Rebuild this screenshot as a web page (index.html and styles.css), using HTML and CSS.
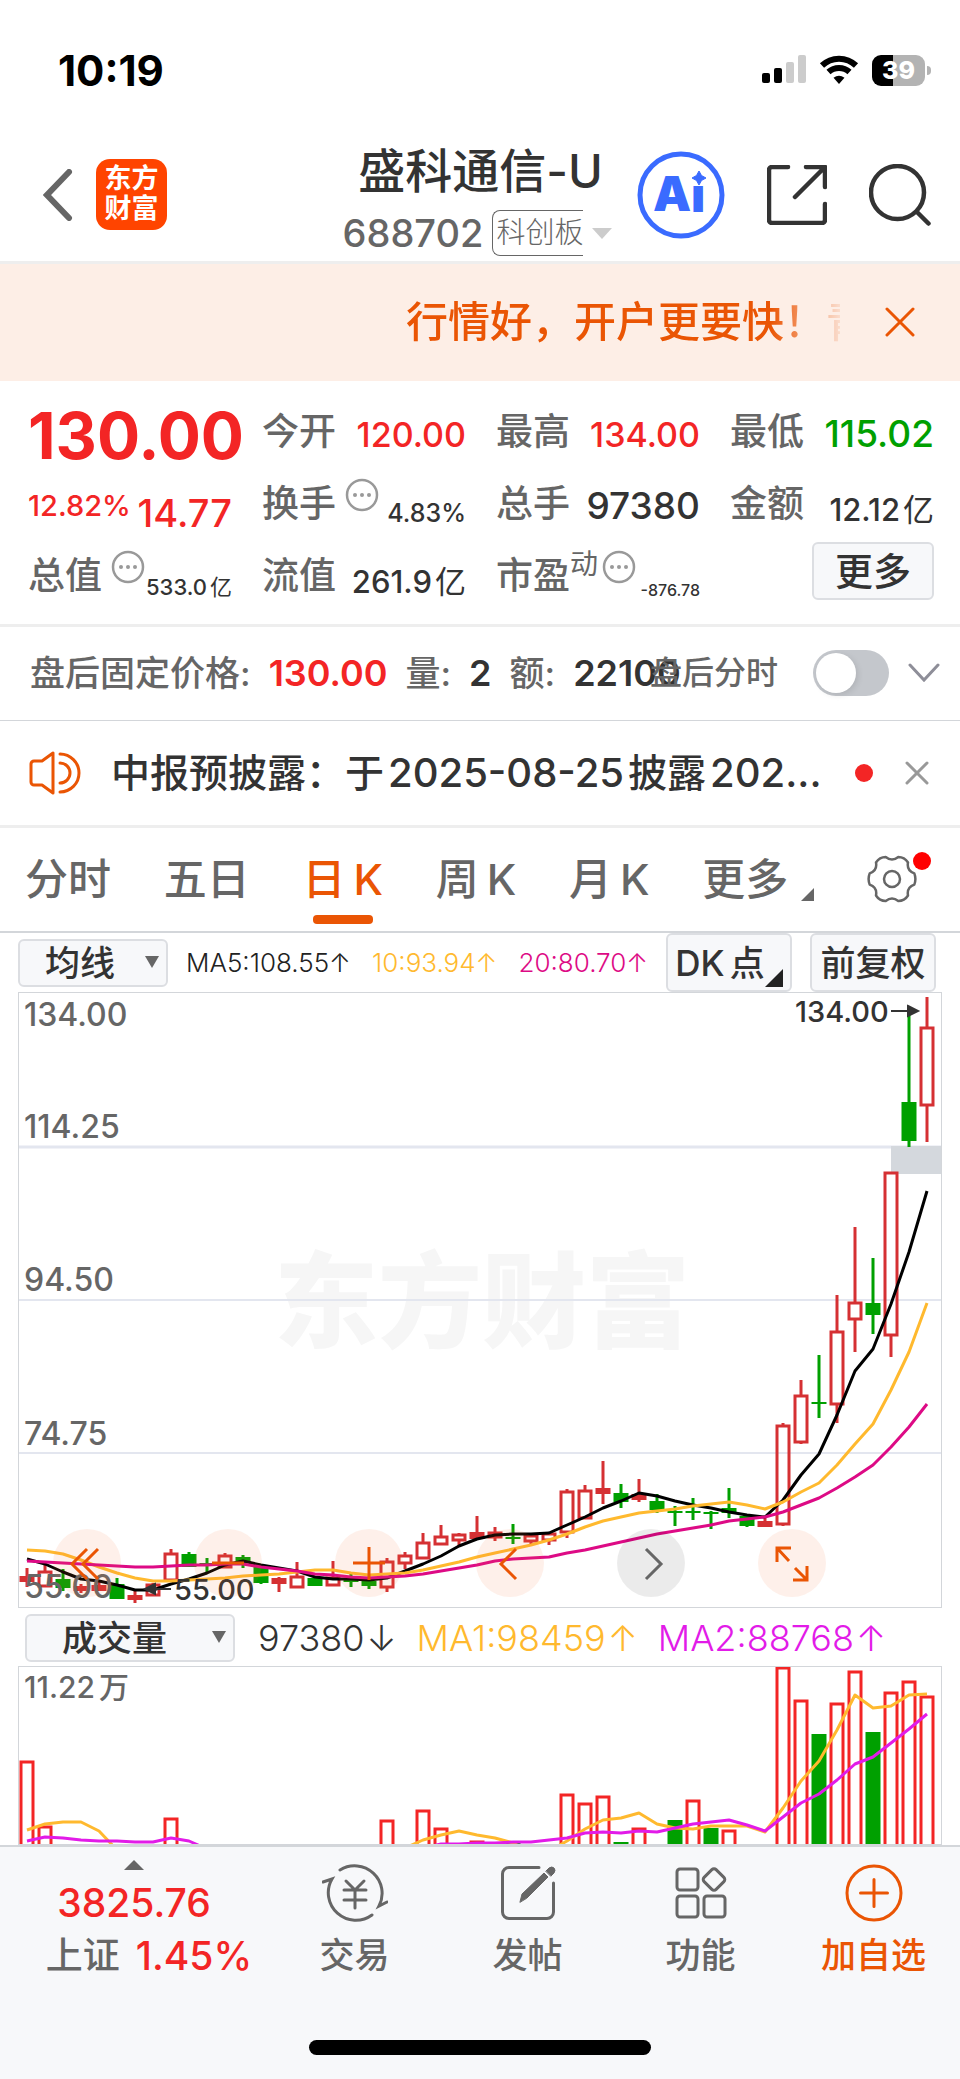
FILE: index.html
```html
<!DOCTYPE html>
<html lang="zh-CN">
<head>
    <meta charset="UTF-8">
    <meta name="viewport" content="width=device-width, initial-scale=1.0">
    <title>盛科通信-U 688702</title>
    <link rel="stylesheet" href="styles.css">
</head>
<body>
    <div class="status-bar">
        <span class="clock">10:19</span>
        <div class="status-icons">
            <svg width="44" height="30" viewBox="0 0 44 30">
                <rect x="0" y="18" width="8" height="10" rx="2"/>
                <rect x="12" y="13" width="8" height="15" rx="2"/>
                <rect x="24" y="7" width="8" height="21" rx="2" fill="#ccc"/>
                <rect x="36" y="0" width="8" height="28" rx="2" fill="#ccc"/>
            </svg>
            <svg width="40" height="30" viewBox="0 0 40 30" fill="none" stroke="#000" stroke-width="6">
                <path d="M3 10.500a24.500 24.500 0 0 1 34 0"/>
                <path d="M9.500 17a15.500 15.500 0 0 1 21 0"/>
                <path d="M20 29l-5.500-6.200a9 9 0 0 1 11 0z" fill="#000" stroke="none"/>
            </svg>
            <div class="battery">39</div>
        </div>
    </div>

    <header class="header">
        <div class="header-left">
            <button class="icon-btn" aria-label="返回">
                <svg width="30" height="52" viewBox="0 0 30 52" fill="none" stroke="#666" stroke-width="6" stroke-linecap="round"><path d="M26 3L4 26l22 23"/></svg>
            </button>
            <div class="logo">东方<br>财富</div>
        </div>
        <div class="header-title">
            <h1>盛科通信-U</h1>
            <div class="header-sub">
                <span class="code">688702</span>
                <span class="board">科创板</span>
                <svg width="20" height="11" viewBox="0 0 20 11"><path d="M0 0h20L10 11z" fill="#ccc"/></svg>
            </div>
        </div>
        <div class="header-right">
            <button class="icon-btn" aria-label="AI">
                <svg width="88" height="88" viewBox="0 0 88 88">
                    <circle cx="44" cy="44" r="41" fill="none" stroke="#3a6bff" stroke-width="5"/>
                    <text class="ai" x="16" y="60">A</text>
                    <text class="ai" x="54" y="61">ı</text>
                    <path d="M62 20l2.500 4.500L69 27l-4.500 2.500L62 34l-2.500-4.500L55 27l4.500-2.500z" fill="#3a6bff" stroke="#3a6bff"/>
                </svg>
            </button>
            <button class="icon-btn" aria-label="分享">
                <svg width="60" height="60" viewBox="0 0 60 60" fill="none" stroke="#333" stroke-width="4.500" stroke-linecap="round" stroke-linejoin="round"><path d="M21 2H5a3 3 0 0 0-3 3v50a3 3 0 0 0 3 3h50a3 3 0 0 0 3-3V39M39 2h19v20M58 2L28 32"/></svg>
            </button>
            <button class="icon-btn" aria-label="搜索">
                <svg width="62" height="62" viewBox="0 0 62 62" fill="none" stroke="#333" stroke-width="4.500" stroke-linecap="round"><circle cx="28.500" cy="28.500" r="26.500"/><path d="M48 48l11.500 11.500"/></svg>
            </button>
        </div>
    </header>

    <div class="banner">
        <a class="banner-text" href="#">行情好，开户更要快！青</a>
        <button class="icon-btn" aria-label="关闭">
            <svg width="30" height="30" viewBox="0 0 30 30" stroke="#ea5504" stroke-width="3" stroke-linecap="round"><path d="M2 2l26 26M28 2L2 28"/></svg>
        </button>
    </div>

    <section class="quote">
        <div class="cell"><span class="price">130.00</span></div>
        <div class="cell"><span class="label">今开</span><span class="value s34 up">120.00</span></div>
        <div class="cell"><span class="label">最高</span><span class="value s34 up">134.00</span></div>
        <div class="cell"><span class="label">最低</span><span class="value s37 down">115.02</span></div>

        <div class="cell"><span class="pct">12.82%</span><span class="change">14.77</span></div>
        <div class="cell"><span class="label">换手</span><svg class="more-dot" viewBox="0 0 34 34"><use href="#dots"/></svg><span class="value s25">4.83%</span></div>
        <div class="cell"><span class="label">总手</span><span class="value s37">97380</span></div>
        <div class="cell"><span class="label">金额</span><span class="value s31">12.12<i>亿</i></span></div>

        <div class="cell"><span class="label">总值</span><svg class="more-dot" viewBox="0 0 34 34"><use href="#dots"/></svg><span class="value s22">533.0<i>亿</i></span></div>
        <div class="cell"><span class="label">流值</span><span class="value s31">261.9<i>亿</i></span></div>
        <div class="cell"><span class="label">市盈</span><sup class="dyn">动</sup><svg class="more-dot" viewBox="0 0 34 34"><use href="#dots"/></svg><span class="value s16">-876.78</span></div>
        <div class="cell"><button class="more-btn">更多</button></div>
    </section>

    <svg class="defs" width="0" height="0">
        <defs>
            <g id="dots">
                <circle cx="17" cy="17" r="15" fill="none" stroke="#999" stroke-width="2.500"/>
                <g fill="#999"><circle cx="10" cy="17" r="2"/><circle cx="17" cy="17" r="2"/><circle cx="24" cy="17" r="2"/></g>
            </g>
        </defs>
    </svg>

    <section class="after-hours">
        <div class="after-left">
            <span>盘后固定价格:</span><b class="up">130.00</b><span>量:</span><b>2</b><span>额:</span><b>22100</b>
        </div>
        <label class="after-label" for="afterSwitch">盘后分时</label>
        <input class="switch" type="checkbox" role="switch" id="afterSwitch">
        <button class="icon-btn" aria-label="展开">
            <svg width="32" height="20" viewBox="0 0 32 20" fill="none" stroke="#8e8e98" stroke-width="3" stroke-linecap="round"><path d="M2 2l14 15L30 2"/></svg>
        </button>
    </section>

    <section class="notice">
        <svg width="52" height="44" viewBox="0 0 52 44" fill="none" stroke="#ea5504" stroke-width="3" stroke-linejoin="round" stroke-linecap="round">
            <path d="M24 2v40L13 34H5a3 3 0 0 1-3-3V13a3 3 0 0 1 3-3h8z"/>
            <path d="M31 12a10 10 0 0 1 0 20M31 3a19 19 0 0 1 0 38"/>
        </svg>
        <a class="notice-text" href="#">中报预披露：于<span>2025-08-25</span>披露<span>202...</span></a>
        <span class="dot"></span>
        <button class="icon-btn" aria-label="关闭">
            <svg width="24" height="24" viewBox="0 0 24 24" stroke="#999" stroke-width="3" stroke-linecap="round"><path d="M2 2l20 20M22 2L2 22"/></svg>
        </button>
    </section>

    <nav class="tabs">
        <button>分时</button>
        <button>五日</button>
        <button class="active">日<span>K</span></button>
        <button>周<span>K</span></button>
        <button>月<span>K</span></button>
        <button class="tab-more">更多</button>
        <button class="gear" aria-label="设置">
            <svg width="50" height="48" viewBox="-25 -24 50 48" fill="none" stroke="#666" stroke-width="2.500" stroke-linejoin="round">
                <path d="M22.300 5.600Q14.500 8.400 16 16.500Q12.500 22 6.300 22Q0 17 -6.300 22Q-12.500 22 -16 16.500Q-14.500 8.400 -22.300 5.600Q-24.500 0 -22.300 -5.600Q-14.500 -8.400 -16 -16.500Q-12.500 -22 -6.300 -22Q0 -17 6.300 -22Q12.500 -22 16 -16.500Q14.500 -8.400 22.300 -5.600Q24.500 0 22.300 5.600z"/>
                <circle r="8"/>
            </svg>
            <span class="badge"></span>
        </button>
    </nav>

    <section class="ma-bar">
        <div class="select-box">
            <select id="mainIndex" aria-label="主图指标"><option>均线</option></select>
        </div>
        <div class="ma-values">
            <span class="ma5">MA5:108.55↑</span>
            <span class="ma10">10:93.94↑</span>
            <span class="ma20">20:80.70↑</span>
        </div>
        <div class="ma-buttons">
            <button class="tool-btn corner">DK<span>点</span></button>
            <button class="tool-btn">前复权</button>
        </div>
    </section>

    <section class="chart">
        <svg id="kline" class="plot" viewBox="18 992 924 616">
            <text class="watermark" x="274" y="1340">东方财富</text>
            <g stroke="#e3e6ef" stroke-width="2">
                <path d="M18 1147h924" stroke-width="3"/>
                <path d="M18 1300h924M18 1453h924"/>
            </g>
            <rect x="891" y="1146" width="51" height="28" fill="#d4d8dd"/>
            <g id="candles"></g>
            <g fill="none" stroke-width="3" stroke-linejoin="round">
                <polyline id="lineMa5" stroke="#000"/>
                <polyline id="lineMa10" stroke="#ffb92e"/>
                <polyline id="lineMa20" stroke="#dd0a85"/>
            </g>
            <g class="axis">
                <text x="24" y="1026">134.00</text>
                <text x="24" y="1138">114.25</text>
                <text x="24" y="1291">94.50</text>
                <text x="24" y="1445">74.75</text>
                <text x="24" y="1598">55.00</text>
            </g>
            <g class="mark">
                <text x="795" y="1022">134.00</text>
                <path d="M891 1011h20M908 1006l10 5-10 5z"/>
                <text x="174" y="1600">55.00</text>
                <path d="M171 1589h-20M155 1584l-10 5 10 5z"/>
            </g>
        </svg>
        <div class="chart-tools">
            <button aria-label="最左"><svg viewBox="0 0 68 68"><path d="M34 20L19 35l15 15M45 20L30 35l15 15"/></svg></button>
            <button aria-label="缩小"><svg viewBox="0 0 68 68"><path d="M18 34h32"/></svg></button>
            <button aria-label="放大"><svg viewBox="0 0 68 68"><path d="M18 34h32M34 18v33"/></svg></button>
            <button aria-label="左移"><svg viewBox="0 0 68 68"><path d="M40 20L25 35l15 15"/></svg></button>
            <button class="off" aria-label="右移"><svg viewBox="0 0 68 68"><path d="M29 20l15 15-15 15"/></svg></button>
            <button aria-label="全屏"><svg viewBox="0 0 68 68"><path d="M19 33V19h14M19 19l12 13M49 37v14H35M49 51L37 39"/></svg></button>
        </div>
    </section>

    <section class="vol-bar">
        <div class="select-box wide">
            <select id="subIndex" aria-label="副图指标"><option>成交量</option></select>
        </div>
        <span>97380<i>↓</i></span>
        <span class="ma10">MA1:98459<i>↑</i></span>
        <span class="vol-ma2">MA2:88768<i>↑</i></span>
    </section>

    <section class="chart volume">
        <svg id="volume" class="plot" viewBox="18 1666 924 179">
            <g id="bars"></g>
            <g fill="none" stroke-width="3" stroke-linejoin="round">
                <polyline id="lineVol1" stroke="#ffb92e"/>
                <polyline id="lineVol2" stroke="#e21be8"/>
            </g>
            <g class="axis"><text x="24" y="1698">11.22<tspan dx="4">万</tspan></text></g>
        </svg>
    </section>

    <footer class="footer">
        <nav class="bottom-nav">
            <a class="index" href="#">
                <svg width="20" height="10" viewBox="0 0 20 10"><path d="M10 0l10 10H0z" fill="#666"/></svg>
                <span class="up">3825.76</span>
                <span class="index-row">上证<span class="up">1.45%</span></span>
            </a>
            <a href="#">
                <svg width="66" height="58" viewBox="323 1864 66 58">
                    <path d="M341 1870a27.500 27.500 0 0 1 39 36l8-4M373 1915a27.500 27.500 0 0 1-40-36l-9 3"/>
                    <path d="M347 1881l9 9 9-9M345 1890h22M345 1900h22M356 1890v18"/>
                </svg>
                交易
            </a>
            <a href="#">
                <svg width="58" height="58" viewBox="500 1864 58 58">
                    <path d="M540 1867.500h-30a6.500 6.500 0 0 0-6.500 6.500v38a6.500 6.500 0 0 0 6.500 6.500h38a6.500 6.500 0 0 0 6.500-6.500v-29"/>
                    <path d="M521 1902l2-8 22-21 4 4-21 21zM547 1871l3-3q3-2 5 0t0 5l-3 3z" fill="#666" stroke-width="1"/>
                </svg>
                发帖
            </a>
            <a href="#">
                <svg width="58" height="58" viewBox="673 1864 58 58">
                    <rect x="678" y="1869" width="21" height="21" rx="3"/>
                    <rect x="678" y="1896" width="21" height="21" rx="3"/>
                    <rect x="705" y="1896" width="21" height="21" rx="3"/>
                    <rect x="706.500" y="1871" width="17" height="17" rx="3" transform="rotate(45 715 1879.500)"/>
                </svg>
                功能
            </a>
            <a class="add" href="#">
                <svg width="58" height="58" viewBox="0 0 58 58"><circle cx="29" cy="29" r="27"/><path d="M15.500 29h27M29 15.500v27"/></svg>
                加自选
            </a>
        </nav>
        <div class="home-bar"></div>
    </footer>

    <script>
        // [type, body top, body bottom, high, low]  u: hollow red, f: solid red, d: green
        const candles = [
            ['f',1576,1582,1568,1587],['u',1571,1587,1565,1587],['d',1579,1588,1569,1591],['f',1586,1591,1584,1593],
            ['f',1585,1591,1582,1591],['d',1584,1599,1578,1599],['f',1595,1600,1591,1603],['u',1584,1596,1583,1596],
            ['u',1553,1581,1549,1581],['d',1554,1567,1552,1567],['d',1563,1566,1558,1573],['u',1555,1568,1553,1568],
            ['d',1557,1563,1555,1568],['d',1567,1583,1567,1584],['f',1578,1584,1577,1592],['u',1576,1588,1562,1588],
            ['d',1578,1586,1578,1586],['u',1577,1586,1561,1586],['d',1580,1582,1574,1587],['d',1581,1586,1580,1589],
            ['u',1561,1588,1558,1592],['u',1555,1564,1552,1569],['u',1542,1559,1533,1559],['u',1536,1545,1525,1545],
            ['u',1534,1541,1533,1546],['f',1532,1539,1516,1539],['u',1532,1538,1527,1541],['d',1537,1539,1524,1544],
            ['u',1535,1542,1535,1544],['u',1533,1541,1532,1545],['u',1491,1533,1489,1538],['u',1490,1519,1485,1519],
            ['f',1488,1494,1461,1504],['d',1493,1502,1484,1508],['f',1494,1500,1479,1502],['d',1501,1510,1494,1513],
            ['d',1511,1513,1506,1526],['d',1511,1513,1498,1520],['d',1512,1514,1511,1529],['d',1508,1513,1488,1518],
            ['d',1516,1526,1515,1527],['f',1521,1527,1517,1527],['u',1425,1525,1423,1526],['u',1395,1443,1380,1444],
            ['d',1402,1404,1355,1418],['u',1331,1405,1295,1423],['u',1302,1320,1227,1352],['d',1303,1315,1258,1334],
            ['u',1172,1336,1172,1357],['d',1102,1141,1011,1147],['u',1027,1106,997,1142]
        ];
        const ma5 = [1559,1564,1572,1579,1581,1585,1590,1590,1584,1579,1573,1565,1561,1565,1568,1571,1577,1579,1579,1580,1578,1571,1564,1556,1546,1539,1535,1534,1534,1533,1525,1517,1508,1501,1493,1496,1501,1505,1508,1512,1515,1517,1500,1475,1454,1415,1371,1349,1304,1252,1191];
        const ma10 = [1550,1551,1554,1560,1567,1573,1578,1581,1581,1580,1579,1578,1576,1575,1574,1572,1570,1570,1573,1575,1574,1573,1570,1566,1562,1557,1553,1549,1545,1540,1534,1527,1521,1517,1513,1511,1509,1506,1504,1502,1505,1509,1502,1492,1483,1465,1444,1424,1390,1352,1303];
        const ma20 = [1561,1562,1563,1564,1565,1566,1567,1567,1566,1565,1565,1564,1564,1567,1569,1571,1574,1575,1577,1578,1577,1576,1574,1571,1568,1565,1561,1559,1558,1557,1553,1550,1546,1542,1538,1534,1531,1528,1525,1521,1519,1517,1512,1505,1498,1488,1477,1465,1447,1427,1404];

        // [index, top, type]
        const bars = [
            [0,1761,'u'],[1,1826,'u'],[8,1818,'u'],[20,1820,'u'],[22,1810,'u'],[23,1828,'u'],[25,1841,'u'],[27,1843,'d'],
            [30,1794,'u'],[31,1803,'u'],[32,1796,'u'],[33,1842,'d'],[34,1828,'u'],[36,1820,'d'],[37,1800,'u'],[38,1828,'d'],
            [39,1830,'u'],[42,1667,'u'],[43,1700,'u'],[44,1734,'d'],[45,1703,'u'],[46,1671,'u'],[47,1732,'d'],
            [48,1692,'u'],[49,1681,'u'],[50,1696,'u']
        ];
        const vol1 = [1830,1824,1822,1822,1831,1850,1860,1860,1860,1860,1860,1860,1860,1860,1860,1860,1860,1860,1860,1860,1856,1848,1840,1835,1831,1835,1838,1843,1852,1851,1841,1829,1820,1818,1813,1824,1828,1829,1826,1826,1826,1832,1808,1781,1761,1730,1695,1708,1706,1695,1694];
        const vol2 = [1841,1837,1838,1840,1841,1841,1842,1842,1838,1841,1849,1856,1860,1860,1860,1860,1860,1860,1860,1860,1858,1854,1848,1844,1844,1843,1843,1842,1842,1840,1838,1833,1832,1833,1831,1832,1828,1824,1822,1820,1825,1831,1817,1803,1794,1780,1764,1757,1743,1729,1714];

        const centerX = i => 27 + i * 18;

        function rect(x, y, w, h, attrs) {
            return `<rect x="${x}" y="${y}" width="${w}" height="${h}" ${attrs}/>`;
        }

        document.getElementById('candles').innerHTML = candles.map(([type, top, bottom, high, low], i) => {
            const x = centerX(i);
            const color = type === 'd' ? '#00a000' : '#d53033';
            const wicks = rect(x - 1.5, high, 3, top - high, `fill="${color}"`) + rect(x - 1.5, bottom, 3, low - bottom, `fill="${color}"`);
            const body = type === 'u'
                ? rect(x - 6, top + 1, 12, bottom - top - 2, `fill="none" stroke="${color}" stroke-width="3"`)
                : rect(x - 7.5, top, 15, bottom - top, `fill="${color}"`);
            return wicks + body;
        }).join('');

        document.getElementById('bars').innerHTML = bars.map(([i, top, type]) => {
            const x = centerX(i);
            return type === 'd'
                ? rect(x - 7.5, top, 15, 1860 - top, 'fill="#00a000"')
                : rect(x - 6, top + 1, 12, 1860 - top, 'fill="none" stroke="#f32525" stroke-width="3"');
        }).join('');

        function drawLine(id, values) {
            document.getElementById(id).setAttribute('points', values.map((y, i) => centerX(i) + ',' + y).join(' '));
        }
        drawLine('lineMa5', ma5);
        drawLine('lineMa10', ma10);
        drawLine('lineMa20', ma20);
        drawLine('lineVol1', vol1);
        drawLine('lineVol2', vol2);
    </script>
</body>
</html>
```

FILE: styles.css
```css
* {
    box-sizing: border-box;
}
body {
    margin: 0;
    min-height: 100vh;
    display: flex;
    flex-direction: column;
    font-family: Inter, "Noto Sans CJK SC", sans-serif;
    background: #fff;
    color: #333;
}
button, select {
    font-family: inherit;
    color: inherit;
    border: none;
    background: none;
    padding: 0;
    margin: 0;
    cursor: pointer;
}
a {
    color: inherit;
    text-decoration: none;
}
svg {
    display: block;
    flex: none;
}
i {
    font-style: normal;
}
.defs {
    position: absolute;
}
.icon-btn {
    flex: none;
}
.up {
    color: #f32525;
}
.down {
    color: #00a000;
}

/* status bar */
.status-bar {
    display: flex;
    justify-content: space-between;
    align-items: center;
    height: 140px;
    padding: 0 29px 0 58px;
    color: #000;
}
.clock {
    font-size: 42px;
    font-weight: 700;
}
.status-icons {
    display: flex;
    align-items: center;
    gap: 13px;
}
.battery {
    position: relative;
    width: 53px;
    height: 31px;
    margin-right: 6px;
    border-radius: 9px;
    background: linear-gradient(to right, #000 39%, #b3b3b3 39%);
    color: #fff;
    font-size: 25px;
    font-weight: 800;
    line-height: 31px;
    text-align: center;
}
.battery::after {
    content: "";
    position: absolute;
    right: -6px;
    top: 11px;
    width: 4px;
    height: 9px;
    border-radius: 0 4px 4px 0;
    background: #b3b3b3;
}

/* header */
.header {
    display: grid;
    grid-template-columns: 1fr auto 1fr;
    height: 124px;
    padding: 0 29px 0 30px;
    border-bottom: 3px solid #eee;
}
.header-left, .header-right {
    display: flex;
    align-items: center;
    padding-bottom: 12px;
}
.header-left {
    gap: 23px;
    padding-left: 13px;
}
.header-right {
    justify-content: flex-end;
    gap: 42px;
}
.logo {
    width: 71px;
    height: 71px;
    padding-top: 5px;
    border-radius: 14px;
    background: #ff4400;
    color: #fff;
    font-size: 27px;
    font-weight: 700;
    line-height: 30px;
    text-align: center;
}
.ai {
    font-size: 48px;
    font-weight: 900;
    fill: #3a6bff;
}
.header-title h1 {
    margin: 0;
    font-size: 47px;
    font-weight: 500;
    line-height: 62px;
    text-align: center;
}
.header-sub {
    display: flex;
    justify-content: center;
    align-items: center;
    gap: 9px;
    padding: 8px 6px 0 0;
    color: #666;
}
.code {
    font-size: 38px;
    font-weight: 500;
    line-height: 46px;
}
.board {
    padding-left: 3px;
    border: 1px solid #666;
    border-right: none;
    border-radius: 8px 0 0 8px;
    font-size: 29px;
    font-weight: 300;
    line-height: 44px;
}

/* banner */
.banner {
    display: flex;
    align-items: center;
    justify-content: flex-end;
    height: 117px;
    padding: 0 45px 2px;
    background: #fdeee6;
}
.banner-text {
    width: 434px;
    margin-right: 45px;
    overflow: hidden;
    white-space: nowrap;
    color: #ea5504;
    font-size: 42px;
    font-weight: 500;
    line-height: 60px;
    -webkit-mask-image: linear-gradient(to right, #000 84%, transparent 102%);
    mask-image: linear-gradient(to right, #000 84%, transparent 102%);
}

/* quote */
.quote {
    display: grid;
    grid-template-columns: repeat(4, 1fr);
    grid-auto-rows: 48px;
    gap: 24px 30px;
    padding: 27px 26px 24px 28px;
    border-bottom: 3px solid #eee;
}
.cell {
    display: flex;
    align-items: flex-end;
    white-space: nowrap;
    min-width: 0;
}
.label {
    color: #666;
    font-size: 37px;
    font-weight: 500;
    line-height: 48px;
}
.value {
    margin-left: auto;
    font-weight: 500;
    line-height: 1.2;
}
.value i {
    font-weight: 400;
    margin-left: 3px;
}
.s37 { font-size: 37px; }
.s34 { font-size: 34px; }
.s31 { font-size: 31px; }
.s25 { font-size: 25px; }
.s22 { font-size: 22px; }
.s16 { font-size: 16px; }
.price {
    color: #f32525;
    font-size: 64px;
    font-weight: 700;
    line-height: 40px;
}
.pct, .change {
    color: #f32525;
    font-weight: 500;
}
.pct {
    font-size: 29px;
    line-height: 44px;
}
.change {
    margin-left: auto;
    font-size: 38px;
    line-height: 30px;
}
.more-dot {
    align-self: flex-start;
    width: 34px;
    height: 34px;
    margin: -2px 0 0 9px;
}
.dyn {
    align-self: flex-start;
    color: #666;
    font-size: 28px;
    line-height: 24px;
}
.dyn + .more-dot {
    margin-left: 4px;
}
.more-btn {
    flex: none;
    width: 122px;
    height: 58px;
    margin-left: auto;
    border: 2px solid #dcdee2;
    border-radius: 6px;
    background: #f7f8fa;
    font-size: 38px;
    font-weight: 500;
    line-height: 54px;
}

/* after hours */
.after-hours {
    display: flex;
    align-items: center;
    height: 94px;
    padding: 0 20px 2px 30px;
    border-bottom: 1px solid #d3d6da;
    color: #666;
}
.after-left {
    flex: 1;
    min-width: 0;
    display: flex;
    align-items: center;
    gap: 18px;
    white-space: nowrap;
    font-size: 35px;
    font-weight: 500;
    line-height: 50px;
}
.after-left b {
    font-weight: 600;
    font-size: 36px;
}
.after-left b:not(.up) {
    color: #333;
}
.after-label {
    margin-right: 35px;
    font-size: 32px;
    font-weight: 500;
    line-height: 50px;
}
.switch {
    appearance: none;
    flex: none;
    width: 76px;
    height: 46px;
    margin: 0 19px 0 0;
    padding: 3px;
    border-radius: 23px;
    background: #c4c7cc;
}
.switch::before {
    content: "";
    display: block;
    width: 40px;
    height: 40px;
    border-radius: 50%;
    background: #fff;
    box-shadow: 2px 2px 6px rgba(0,0,0,0.1);
}
.switch:checked::before {
    margin-left: 30px;
}

/* notice */
.notice {
    display: flex;
    align-items: center;
    height: 107px;
    padding: 0 31px 0 29px;
    border-bottom: 3px solid #eee;
}
.notice-text {
    flex: 1;
    min-width: 0;
    margin-left: 30px;
    overflow: hidden;
    white-space: nowrap;
    font-size: 39px;
    font-weight: 500;
    line-height: 56px;
}
.notice-text span {
    margin: 0 4px;
    font-size: 40px;
}
.dot {
    width: 18px;
    height: 18px;
    margin-right: 32px;
    border-radius: 50%;
    background: #f32525;
}

/* tabs */
.tabs {
    display: flex;
    justify-content: space-between;
    height: 105px;
    padding: 0 43px 0 25px;
    border-bottom: 2px solid #d3d6da;
    color: #666;
}
.tabs button {
    position: relative;
    font-size: 43px;
    font-weight: 500;
    line-height: 60px;
    padding-bottom: 2px;
}
.tabs button span {
    margin-left: 8px;
}
.tabs .active {
    color: #ea5504;
}
.tabs .active::after {
    content: "";
    position: absolute;
    left: 50%;
    bottom: 7px;
    width: 60px;
    height: 9px;
    margin-left: -30px;
    border-radius: 4px;
    background: #ea5504;
}
.tab-more::after {
    content: "";
    position: absolute;
    right: -26px;
    bottom: 30px;
    border-left: 13px solid transparent;
    border-bottom: 13px solid #666;
}
.tabs .gear {
    margin-left: 26px;
}
.badge {
    position: absolute;
    top: 24px;
    right: -14px;
    width: 18px;
    height: 18px;
    border-radius: 50%;
    background: #f00;
}

/* indicators */
.ma-bar {
    display: flex;
    align-items: center;
    height: 59px;
    padding: 0 24px 0 18px;
    font-size: 26px;
    font-weight: 300;
}
.ma-values {
    flex: 1;
    display: flex;
    justify-content: space-between;
    padding: 0 18px;
    white-space: nowrap;
}
.ma-buttons {
    display: flex;
    gap: 18px;
}
.ma5 { color: #222; }
.ma10 { color: #ffb92e; }
.ma20 { color: #dd0a85; }
.vol-ma2 { color: #e21be8; }
.select-box {
    position: relative;
    width: 150px;
    height: 48px;
}
.select-box.wide {
    width: 210px;
}
.select-box select {
    appearance: none;
    width: 100%;
    height: 100%;
    padding-left: 25px;
    border: 2px solid #dcdee2;
    border-radius: 6px;
    background: #f7f8fa;
    font-size: 35px;
    font-weight: 500;
    line-height: 44px;
}
.select-box.wide select {
    padding-left: 35px;
}
.select-box::after {
    content: "";
    position: absolute;
    right: 9px;
    top: 17px;
    border: 7px solid transparent;
    border-top: 12px solid #666;
    border-bottom: none;
    pointer-events: none;
}
.tool-btn {
    position: relative;
    width: 126px;
    height: 59px;
    border: 2px solid #dcdee2;
    border-radius: 6px;
    background: #f7f8fa;
    font-size: 35px;
    font-weight: 500;
    line-height: 50px;
    white-space: nowrap;
}
.tool-btn span {
    margin-left: 5px;
}
.tool-btn.corner {
    padding-right: 18px;
}
.tool-btn.corner::after {
    content: "";
    position: absolute;
    right: 7px;
    bottom: 3px;
    border-left: 18px solid transparent;
    border-bottom: 18px solid #222;
}

/* charts */
.chart {
    position: relative;
    margin: 0 18px;
    outline: 1px solid #d3d6da;
    outline-offset: -1px;
}
.plot {
    width: 100%;
    height: auto;
}
.watermark {
    font-size: 104px;
    font-weight: 900;
    fill: #f6f6f6;
}
.axis {
    font-size: 32px;
    font-weight: 500;
    fill: #666;
}
.volume .axis {
    font-size: 30px;
}
.mark {
    font-size: 29px;
    font-weight: 500;
    fill: #333;
}
.mark path {
    stroke: #333;
    stroke-width: 2;
}
.chart-tools {
    position: absolute;
    left: 35px;
    bottom: 11px;
    display: flex;
    gap: 73px;
}
.chart-tools button {
    width: 68px;
    height: 68px;
    border-radius: 50%;
    background: rgba(250,110,50,0.1);
}
.chart-tools svg {
    width: 68px;
    height: 68px;
    fill: none;
    stroke: #ea5504;
    stroke-width: 3;
}
.chart-tools .off {
    background: rgba(0,0,0,0.08);
}
.chart-tools .off svg {
    stroke: #666;
}
.vol-bar {
    display: flex;
    align-items: center;
    gap: 20px;
    height: 58px;
    padding: 2px 0 0 25px;
    font-size: 36px;
    font-weight: 300;
    line-height: 48px;
    white-space: nowrap;
}
.vol-bar .select-box {
    margin-right: 3px;
}
.vol-bar i {
    margin-left: 2px;
}

/* bottom */
.footer {
    flex: 1;
    display: flex;
    flex-direction: column;
    justify-content: space-between;
    align-items: center;
    position: relative;
    padding-bottom: 24px;
    border-top: 2px solid #d3d6da;
    background: #f7f8fa;
}
.bottom-nav {
    display: grid;
    grid-template-columns: 268fr 173fr 173fr 173fr 173fr;
    width: 100%;
    color: #666;
    font-size: 35px;
    line-height: 48px;
    font-weight: 500;
}
.bottom-nav a {
    display: flex;
    flex-direction: column;
    align-items: center;
    gap: 9px;
    padding-top: 17px;
}
.bottom-nav svg {
    fill: none;
    stroke: #666;
    stroke-width: 3;
    stroke-linecap: round;
}
.bottom-nav .index {
    gap: 3px;
    padding: 13px 0 0;
    font-size: 37px;
    line-height: 50px;
}
.bottom-nav .index svg {
    margin-bottom: 5px;
    stroke: none;
}
.index .up {
    font-size: 39px;
}
.index-row {
    display: flex;
    gap: 16px;
    padding-left: 30px;
}
.bottom-nav .add {
    color: #ea5504;
}
.bottom-nav .add svg {
    stroke: #ea5504;
}
.home-bar {
    width: 342px;
    height: 15px;
    border-radius: 8px;
    background: #000;
}
```
